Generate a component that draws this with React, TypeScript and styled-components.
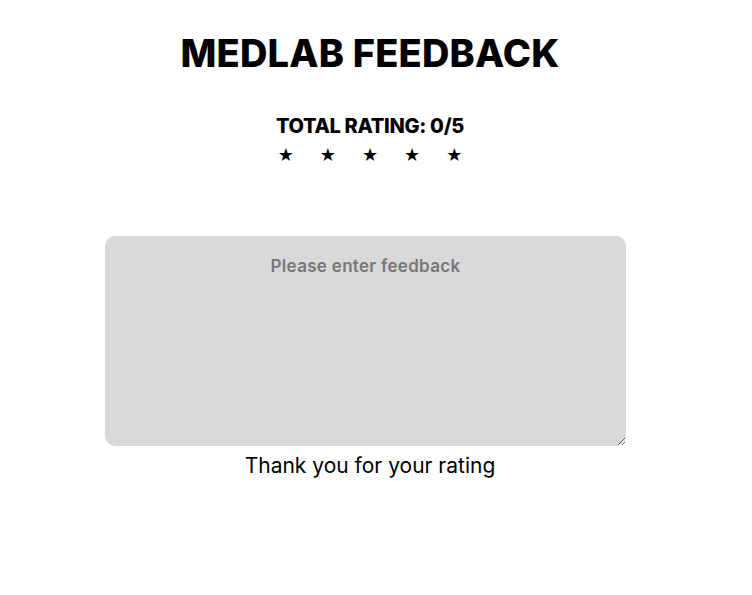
import React from "react";
import styled, { createGlobalStyle } from "styled-components";

const Global = createGlobalStyle`
  html, body { margin: 0; padding: 0; background: #ffffff; }
  body { font-family: "Inter", "Noto Sans", sans-serif; color: #000; }
`;

const Page = styled.div`
  width: 740px;
  display: flex;
  flex-direction: column;
  align-items: center;
  padding-top: 28px;
`;

const Title = styled.h1`
  margin: 0;
  font-size: 38px;
  font-weight: 800;
  line-height: 50px;
  letter-spacing: 0.2px;
`;

const RatingLabel = styled.h2`
  margin: 34px 0 0;
  font-size: 20px;
  font-weight: 800;
  line-height: 28px;
  letter-spacing: -0.3px;
`;

const Stars = styled.div`
  display: flex;
  gap: 26px;
  margin-top: 4px;
`;

const Star = styled.span`
  font-family: "DejaVu Sans", sans-serif;
  font-size: 18px;
  line-height: 22px;
  color: #000;
`;

const FeedbackBox = styled.textarea`
  box-sizing: border-box;
  width: 521px;
  height: 210px;
  margin: 70px 9px 0 0;
  padding: 20px;
  border: none;
  border-radius: 10px;
  background: #d9d9d9;
  font-family: "Inter", "Noto Sans", sans-serif;
  font-size: 17px;
  font-weight: 600;
  letter-spacing: 0.3px;
  text-align: center;
  color: #000;
  outline: none;
  &::placeholder {
    color: #777777;
  }
`;

const Thanks = styled.p`
  margin: 4px 0 0;
  font-size: 21px;
  font-weight: 400;
  line-height: 32px;
`;

export default function App() {
  const rating = 0;
  return (
    <>
      <Global />
      <Page>
        <Title>MEDLAB FEEDBACK</Title>
        <RatingLabel>TOTAL RATING: {rating}/5</RatingLabel>
        <Stars>
          {[1, 2, 3, 4, 5].map((i) => (
            <Star key={i}>★</Star>
          ))}
        </Stars>
        <FeedbackBox placeholder="Please enter feedback" />
        <Thanks>Thank you for your rating</Thanks>
      </Page>
    </>
  );
}
